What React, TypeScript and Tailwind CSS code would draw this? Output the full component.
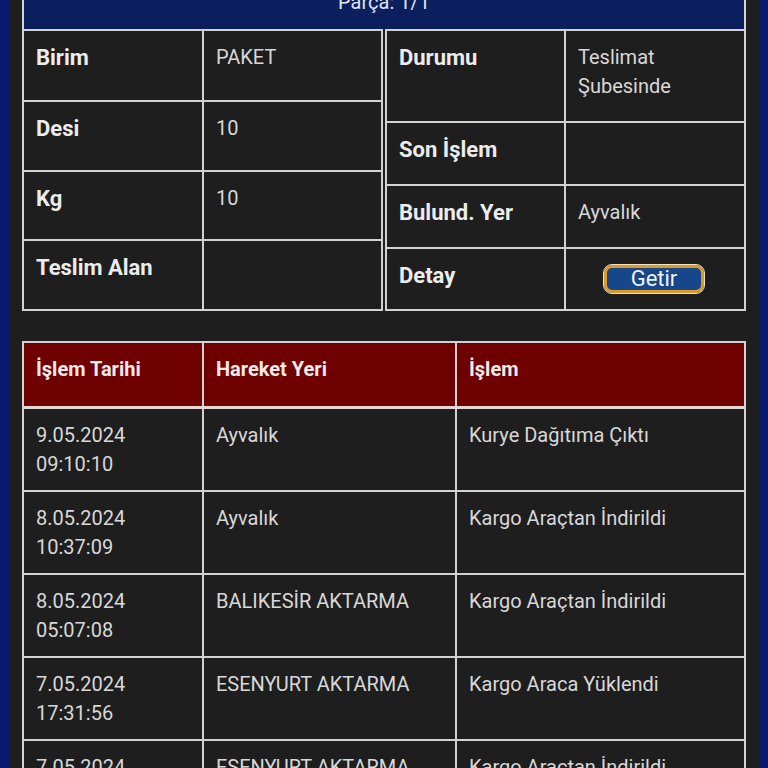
import React from 'react';

type Row = { label: string; value?: React.ReactNode; h: string };

const leftRows: Row[] = [
  { label: 'Birim', value: 'PAKET', h: 'h-[71px]' },
  { label: 'Desi', value: '10', h: 'h-[70px]' },
  { label: 'Kg', value: '10', h: 'h-[69px]' },
  { label: 'Teslim Alan', value: '', h: 'h-[68px]' },
];

const hareketler = [
  { tarih: '9.05.2024', saat: '09:10:10', yer: 'Ayvalık', islem: 'Kurye Dağıtıma Çıktı' },
  { tarih: '8.05.2024', saat: '10:37:09', yer: 'Ayvalık', islem: 'Kargo Araçtan İndirildi' },
  { tarih: '8.05.2024', saat: '05:07:08', yer: 'BALIKESİR AKTARMA', islem: 'Kargo Araçtan İndirildi' },
  { tarih: '7.05.2024', saat: '17:31:56', yer: 'ESENYURT AKTARMA', islem: 'Kargo Araca Yüklendi' },
  { tarih: '7.05.2024', saat: '17:02:41', yer: 'ESENYURT AKTARMA', islem: 'Kargo Araçtan İndirildi' },
];

const GetirButton = () => (
  <button className="w-[100px] h-[28px] rounded-[8px] border-[3px] border-[#d99b2b] outline outline-1 outline-[#f3e3c0] bg-[#17478a] text-[#eef2f8] text-[22px] leading-[22px] flex items-center justify-center">
    Getir
  </button>
);

const InfoTable = ({ rows, labelW }: { rows: Row[]; labelW: string }) => (
  <div className="w-[361px] border-2 border-[#d2d2d2] flex flex-col">
    {rows.map((r, i) => (
      <div key={r.label} className={`flex ${r.h} ${i < rows.length - 1 ? 'border-b-2 border-[#d2d2d2]' : ''}`}>
        <div className={`${labelW} shrink-0 border-r-2 border-[#d2d2d2] px-[12px] pt-[12px] text-[22px] font-bold text-[#ececec]`}>
          {r.label}
        </div>
        <div className="flex-1 px-[12px] pt-[12px] text-[#d8d8d8]">{r.value}</div>
      </div>
    ))}
  </div>
);

export default function App() {
  const rightRows: Row[] = [
    { label: 'Durumu', value: <>Teslimat<br />Şubesinde</>, h: 'h-[92px]' },
    { label: 'Son İşlem', value: '', h: 'h-[63px]' },
    { label: 'Bulund. Yer', value: 'Ayvalık', h: 'h-[63px]' },
    { label: 'Detay', value: '', h: 'h-[60px]' },
  ];

  return (
    <div className="min-h-screen bg-[#0a1a72] px-[9px] font-['Roboto',sans-serif] text-[20px] leading-[29px]">
      <div className="min-h-screen bg-[#1e1e1e] px-[13px] pb-10 overflow-hidden">
        <div className="-mt-[20px]">
          {/* Parça başlığı */}
          <div className="border-x-2 border-t-2 border-[#d2d2d2] bg-[#0b1f5e] pt-[10px] pb-[17px] text-center text-[20px] leading-[20px] text-[#dfe5f2]">
            Parça: 1/1
          </div>

          {/* Detay tabloları */}
          <div className="flex gap-[2px]">
            <InfoTable rows={leftRows} labelW="w-[180px]" />
            <div className="w-[361px] border-2 border-[#d2d2d2] flex flex-col">
              {rightRows.map((r, i) => (
                <div key={r.label} className={`flex ${r.h} ${i < rightRows.length - 1 ? 'border-b-2 border-[#d2d2d2]' : ''}`}>
                  <div className="w-[179px] shrink-0 border-r-2 border-[#d2d2d2] px-[12px] pt-[12px] text-[22px] font-bold text-[#ececec]">
                    {r.label}
                  </div>
                  {r.label === 'Detay' ? (
                    <div className="flex-1 flex items-center justify-center pr-[2px]">
                      <GetirButton />
                    </div>
                  ) : (
                    <div className="flex-1 px-[12px] pt-[12px] text-[#d8d8d8]">{r.value}</div>
                  )}
                </div>
              ))}
            </div>
          </div>

          {/* Hareket tablosu */}
          <div className="mt-[30px] border-2 border-[#d2d2d2]">
            <div className="flex h-[66px] bg-[#6e0000] border-b-[3px] border-[#e6d6d6] font-bold text-[#f2eaea]">
              <div className="w-[180px] shrink-0 border-r-2 border-[#d2d2d2] px-[12px] pt-[12px]">İşlem Tarihi</div>
              <div className="w-[253px] shrink-0 border-r-2 border-[#d2d2d2] px-[12px] pt-[12px]">Hareket Yeri</div>
              <div className="flex-1 px-[12px] pt-[12px]">İşlem</div>
            </div>
            {hareketler.map((h, i) => (
              <div key={i} className={`flex h-[83px] text-[#d8d8d8] ${i < hareketler.length - 1 ? 'border-b-2 border-[#d2d2d2]' : ''}`}>
                <div className="w-[180px] shrink-0 border-r-2 border-[#d2d2d2] px-[12px] pt-[12px]">
                  {h.tarih}
                  <br />
                  {h.saat}
                </div>
                <div className="w-[253px] shrink-0 border-r-2 border-[#d2d2d2] px-[12px] pt-[12px]">{h.yer}</div>
                <div className="flex-1 px-[12px] pt-[12px]">{h.islem}</div>
              </div>
            ))}
          </div>
        </div>
      </div>
    </div>
  );
}
